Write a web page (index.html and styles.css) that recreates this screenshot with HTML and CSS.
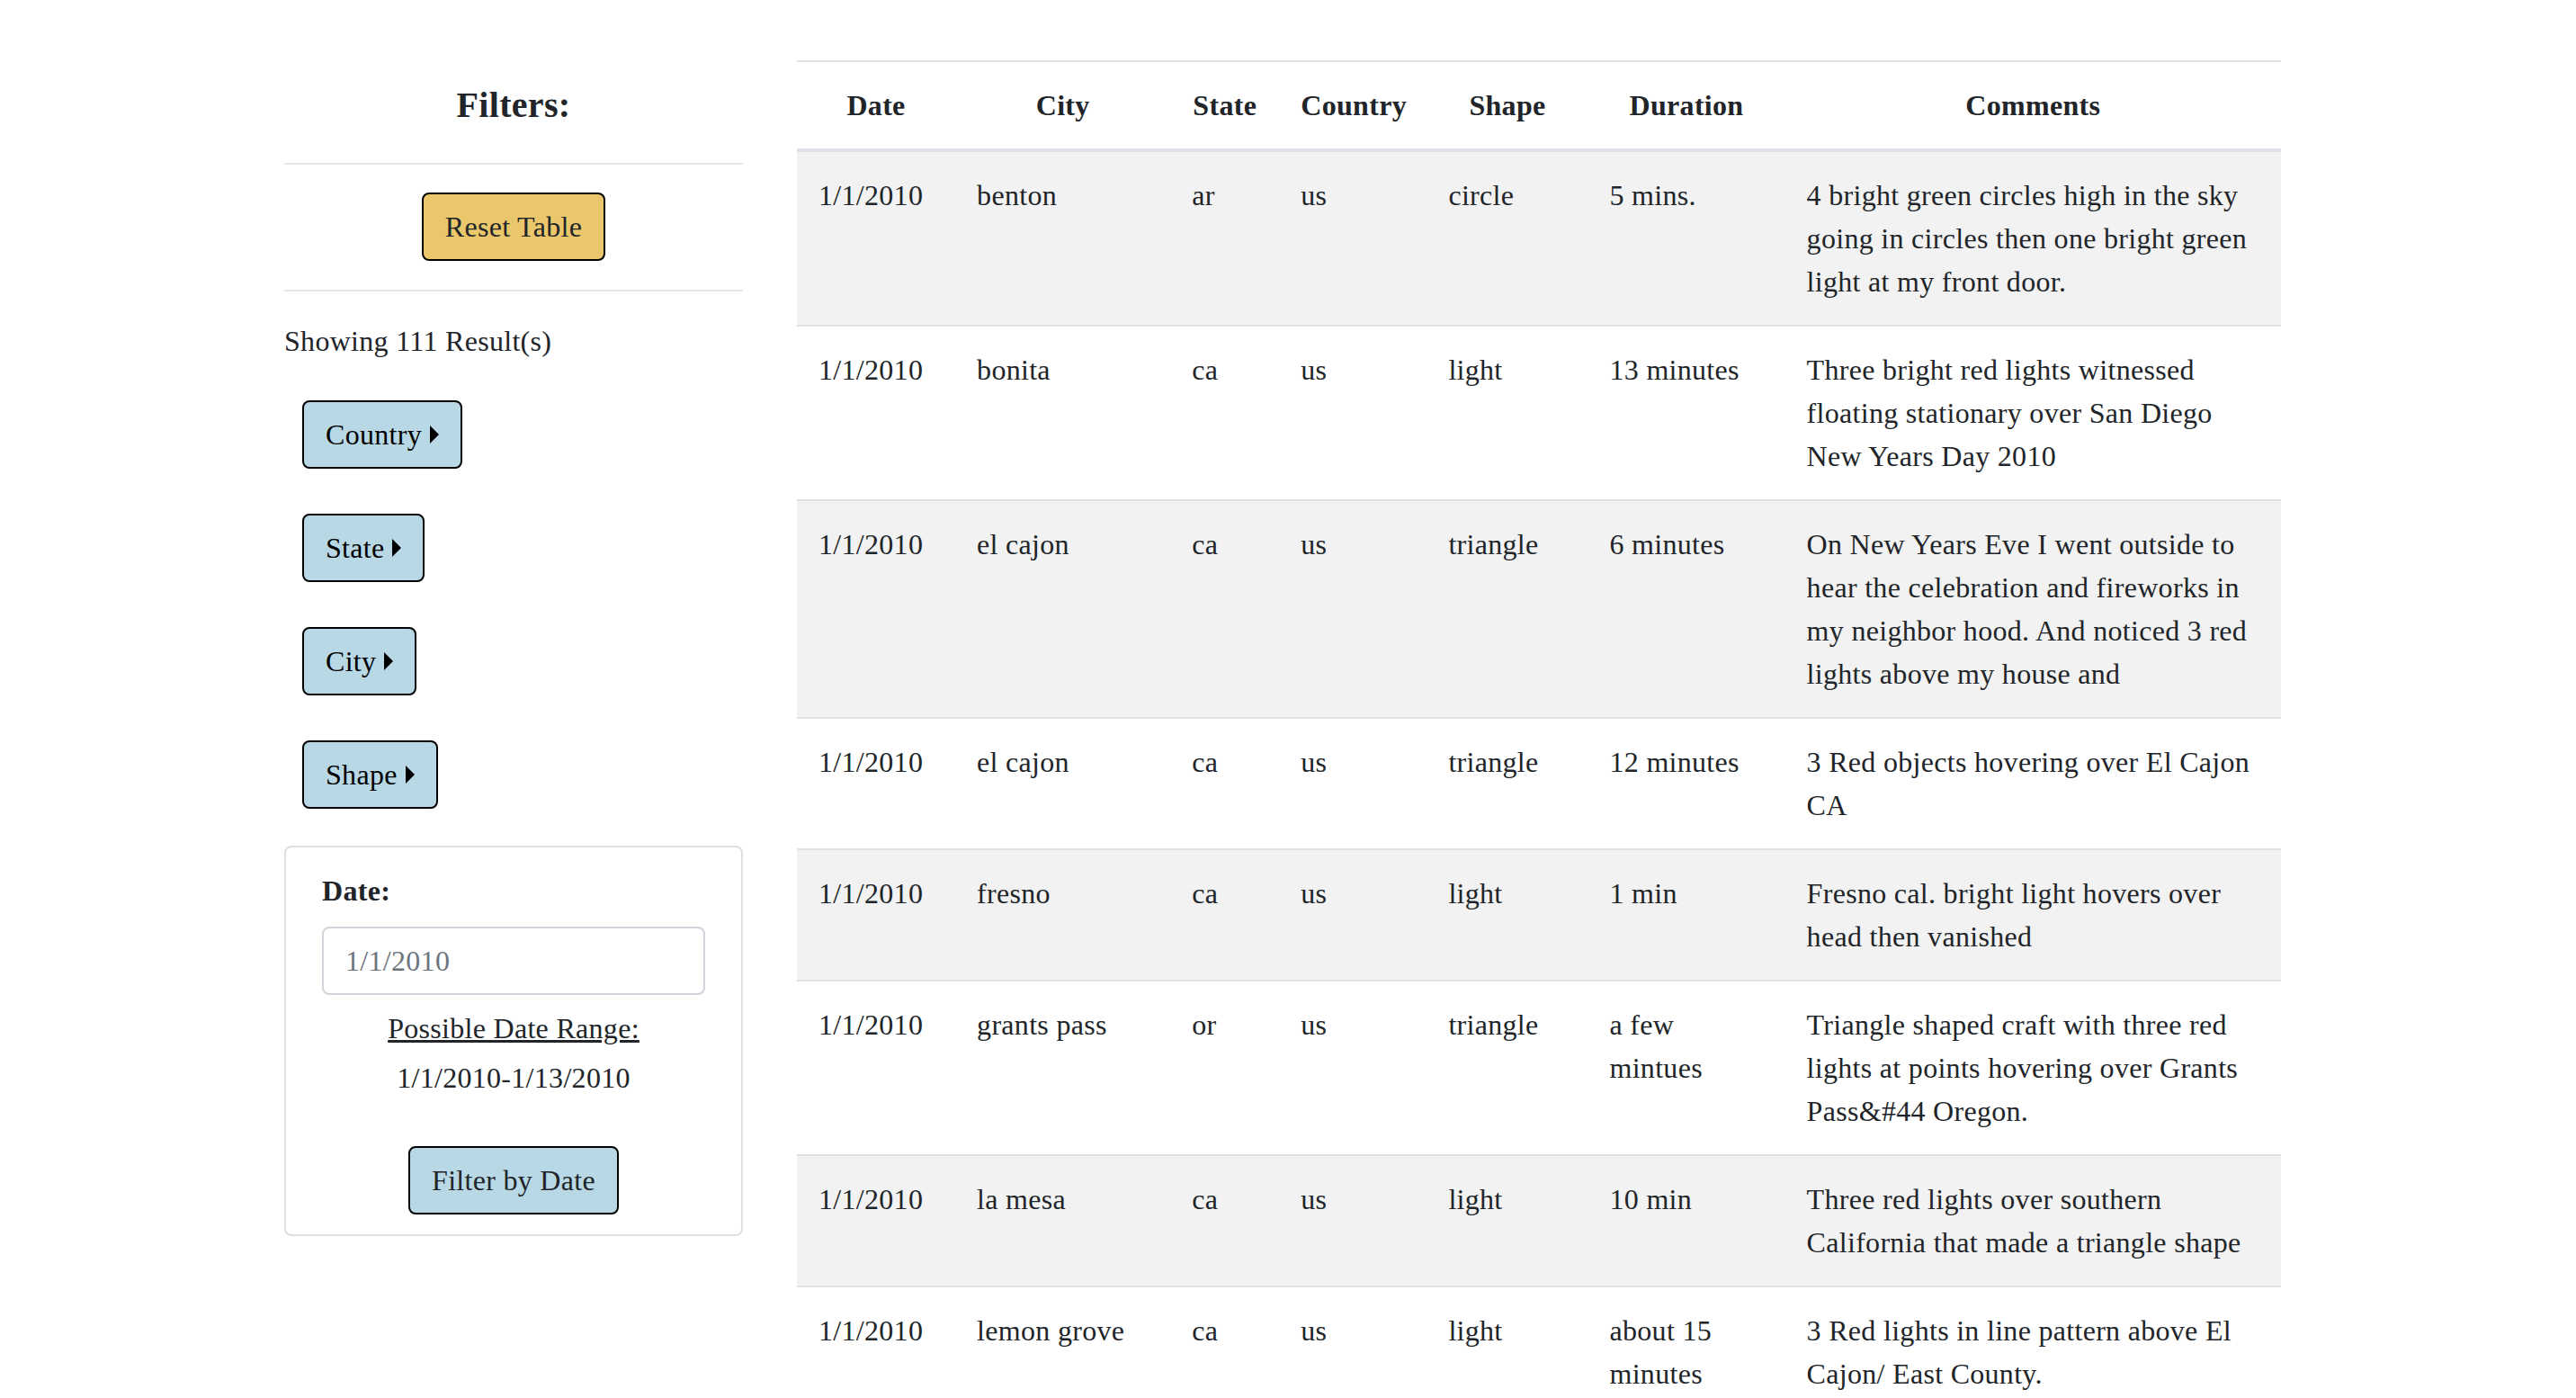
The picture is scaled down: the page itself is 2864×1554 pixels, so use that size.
FILE: index.html
```html
<!DOCTYPE html>
<html lang="en">
<head>
<meta charset="utf-8">
<title>UFO Sightings</title>
<link rel="stylesheet" href="styles.css">
</head>
<body>
<div class="page">
  <aside class="sidebar">
    <h2 class="filters-title">Filters:</h2>
    <div class="reset-row">
      <button class="btn btn-reset" type="button">Reset Table</button>
    </div>
    <p class="result-count">Showing 111 Result(s)</p>
    <div class="dropdowns">
      <button class="btn btn-drop" type="button">Country<span class="caret"></span></button>
      <button class="btn btn-drop" type="button">State<span class="caret"></span></button>
      <button class="btn btn-drop" type="button">City<span class="caret"></span></button>
      <button class="btn btn-drop" type="button">Shape<span class="caret"></span></button>
    </div>
    <div class="card">
      <label class="date-label" for="datetime">Date:</label>
      <input class="date-input" id="datetime" type="text" placeholder="1/1/2010">
      <p class="range-title">Possible Date Range:</p>
      <p class="range-value">1/1/2010-1/13/2010</p>
      <div class="filter-row">
        <button class="btn btn-filter" type="button">Filter by Date</button>
      </div>
    </div>
  </aside>
  <main class="results">
    <table class="ufo-table">
      <colgroup>
        <col class="c-date"><col class="c-city"><col class="c-state"><col class="c-country"><col class="c-shape"><col class="c-duration"><col class="c-comments">
      </colgroup>
      <thead>
        <tr><th>Date</th><th>City</th><th>State</th><th>Country</th><th>Shape</th><th>Duration</th><th>Comments</th></tr>
      </thead>
      <tbody>
        <tr><td>1/1/2010</td><td>benton</td><td>ar</td><td>us</td><td>circle</td><td>5 mins.</td><td>4 bright green circles high in the sky going in circles then one bright green light at my front door.</td></tr>
        <tr><td>1/1/2010</td><td>bonita</td><td>ca</td><td>us</td><td>light</td><td>13 minutes</td><td>Three bright red lights witnessed floating stationary over San Diego New Years Day 2010</td></tr>
        <tr><td>1/1/2010</td><td>el cajon</td><td>ca</td><td>us</td><td>triangle</td><td>6 minutes</td><td>On New Years Eve I went outside to hear the celebration and fireworks in my neighbor hood. And noticed 3 red lights above my house and</td></tr>
        <tr><td>1/1/2010</td><td>el cajon</td><td>ca</td><td>us</td><td>triangle</td><td>12 minutes</td><td>3 Red objects hovering over El Cajon CA</td></tr>
        <tr><td>1/1/2010</td><td>fresno</td><td>ca</td><td>us</td><td>light</td><td>1 min</td><td>Fresno cal. bright light hovers over head then vanished</td></tr>
        <tr><td>1/1/2010</td><td>grants pass</td><td>or</td><td>us</td><td>triangle</td><td>a few mintues</td><td>Triangle shaped craft with three red lights at points hovering over Grants Pass&amp;#44 Oregon.</td></tr>
        <tr><td>1/1/2010</td><td>la mesa</td><td>ca</td><td>us</td><td>light</td><td>10 min</td><td>Three red lights over southern California that made a triangle shape</td></tr>
        <tr><td>1/1/2010</td><td>lemon grove</td><td>ca</td><td>us</td><td>light</td><td>about 15 minutes</td><td>3 Red lights in line pattern above El Cajon/ East County.</td></tr>
      </tbody>
    </table>
  </main>
</div>
</body>
</html>
```
FILE: styles.css
```css
* { box-sizing: border-box; }

html, body {
  margin: 0;
  padding: 0;
  background: #ffffff;
}

body {
  font-family: "Liberation Serif", "Times New Roman", serif;
  font-size: 32px;
  line-height: 48px;
  letter-spacing: 0.3px;
  color: #212529;
  overflow: hidden;
}

.page {
  display: flex;
  align-items: flex-start;
  gap: 60px;
  padding: 67px 0 0 316px;
}

/* ---------- Sidebar ---------- */
.sidebar {
  width: 510px;
  flex: 0 0 510px;
}

.filters-title {
  margin: 26px 0 40px;
  font-size: 40px;
  line-height: 48px;
  font-weight: bold;
  text-align: center;
}

.reset-row {
  border-top: 2px solid #e6e6e6;
  border-bottom: 2px solid #e6e6e6;
  padding: 31px 0 32px;
  display: flex;
  justify-content: center;
}

.btn {
  font-family: inherit;
  font-size: 32px;
  line-height: 48px;
  letter-spacing: 0.3px;
  color: #212529;
  padding: 12px 24px;
  border: 2px solid #000;
  border-radius: 8px;
  cursor: pointer;
  display: inline-flex;
  align-items: center;
}

.btn-reset {
  background: #ebc76b;
}

.result-count {
  margin: 31px 0 42px;
}

.dropdowns {
  display: flex;
  flex-direction: column;
  align-items: flex-start;
  gap: 50px;
  padding-left: 20px;
}

.btn-drop {
  background: #b7d8e4;
  color: #000;
}

.caret {
  display: inline-block;
  width: 0;
  height: 0;
  margin-left: 9px;
  border-top: 10px solid transparent;
  border-bottom: 10px solid transparent;
  border-left: 10px solid #000;
}

.card {
  margin-top: 41px;
  border: 2px solid #dfdfdf;
  border-radius: 8px;
  padding: 24px 40px 22px;
}

.date-label {
  display: block;
  font-weight: bold;
  margin-bottom: 16px;
}

.date-input {
  display: block;
  width: 100%;
  height: 76px;
  padding: 12px 24px;
  font-family: inherit;
  font-size: 32px;
  line-height: 48px;
  letter-spacing: 0.3px;
  color: #495057;
  border: 2px solid #ced4da;
  border-radius: 8px;
  background: #fff;
}

.date-input::placeholder {
  color: #6c757d;
}

.range-title {
  margin: 13px 0 0;
  text-align: center;
  text-decoration: underline;
}

.range-value {
  margin: 7px 0 0;
  text-align: center;
}

.filter-row {
  display: flex;
  justify-content: center;
  margin-top: 52px;
}

.btn-filter {
  background: #b7d8e4;
}

/* ---------- Table ---------- */
.results {
  width: 1650px;
  flex: 0 0 1650px;
}

.ufo-table {
  width: 100%;
  table-layout: fixed;
  border-collapse: collapse;
}

.c-date { width: 176px; }
.c-city { width: 239px; }
.c-state { width: 121px; }
.c-country { width: 164px; }
.c-shape { width: 179px; }
.c-duration { width: 219px; }
.c-comments { width: 551px; }

.ufo-table th,
.ufo-table td {
  padding: 24px;
  vertical-align: top;
  border-top: 2px solid #dee2e6;
}

.ufo-table th {
  text-align: center;
  font-weight: bold;
  border-bottom: 4px solid #dee2e6;
  white-space: nowrap;
}

.ufo-table td {
  text-align: left;
}

.ufo-table tbody tr:nth-of-type(odd) {
  background: #f2f2f2;
}
```
